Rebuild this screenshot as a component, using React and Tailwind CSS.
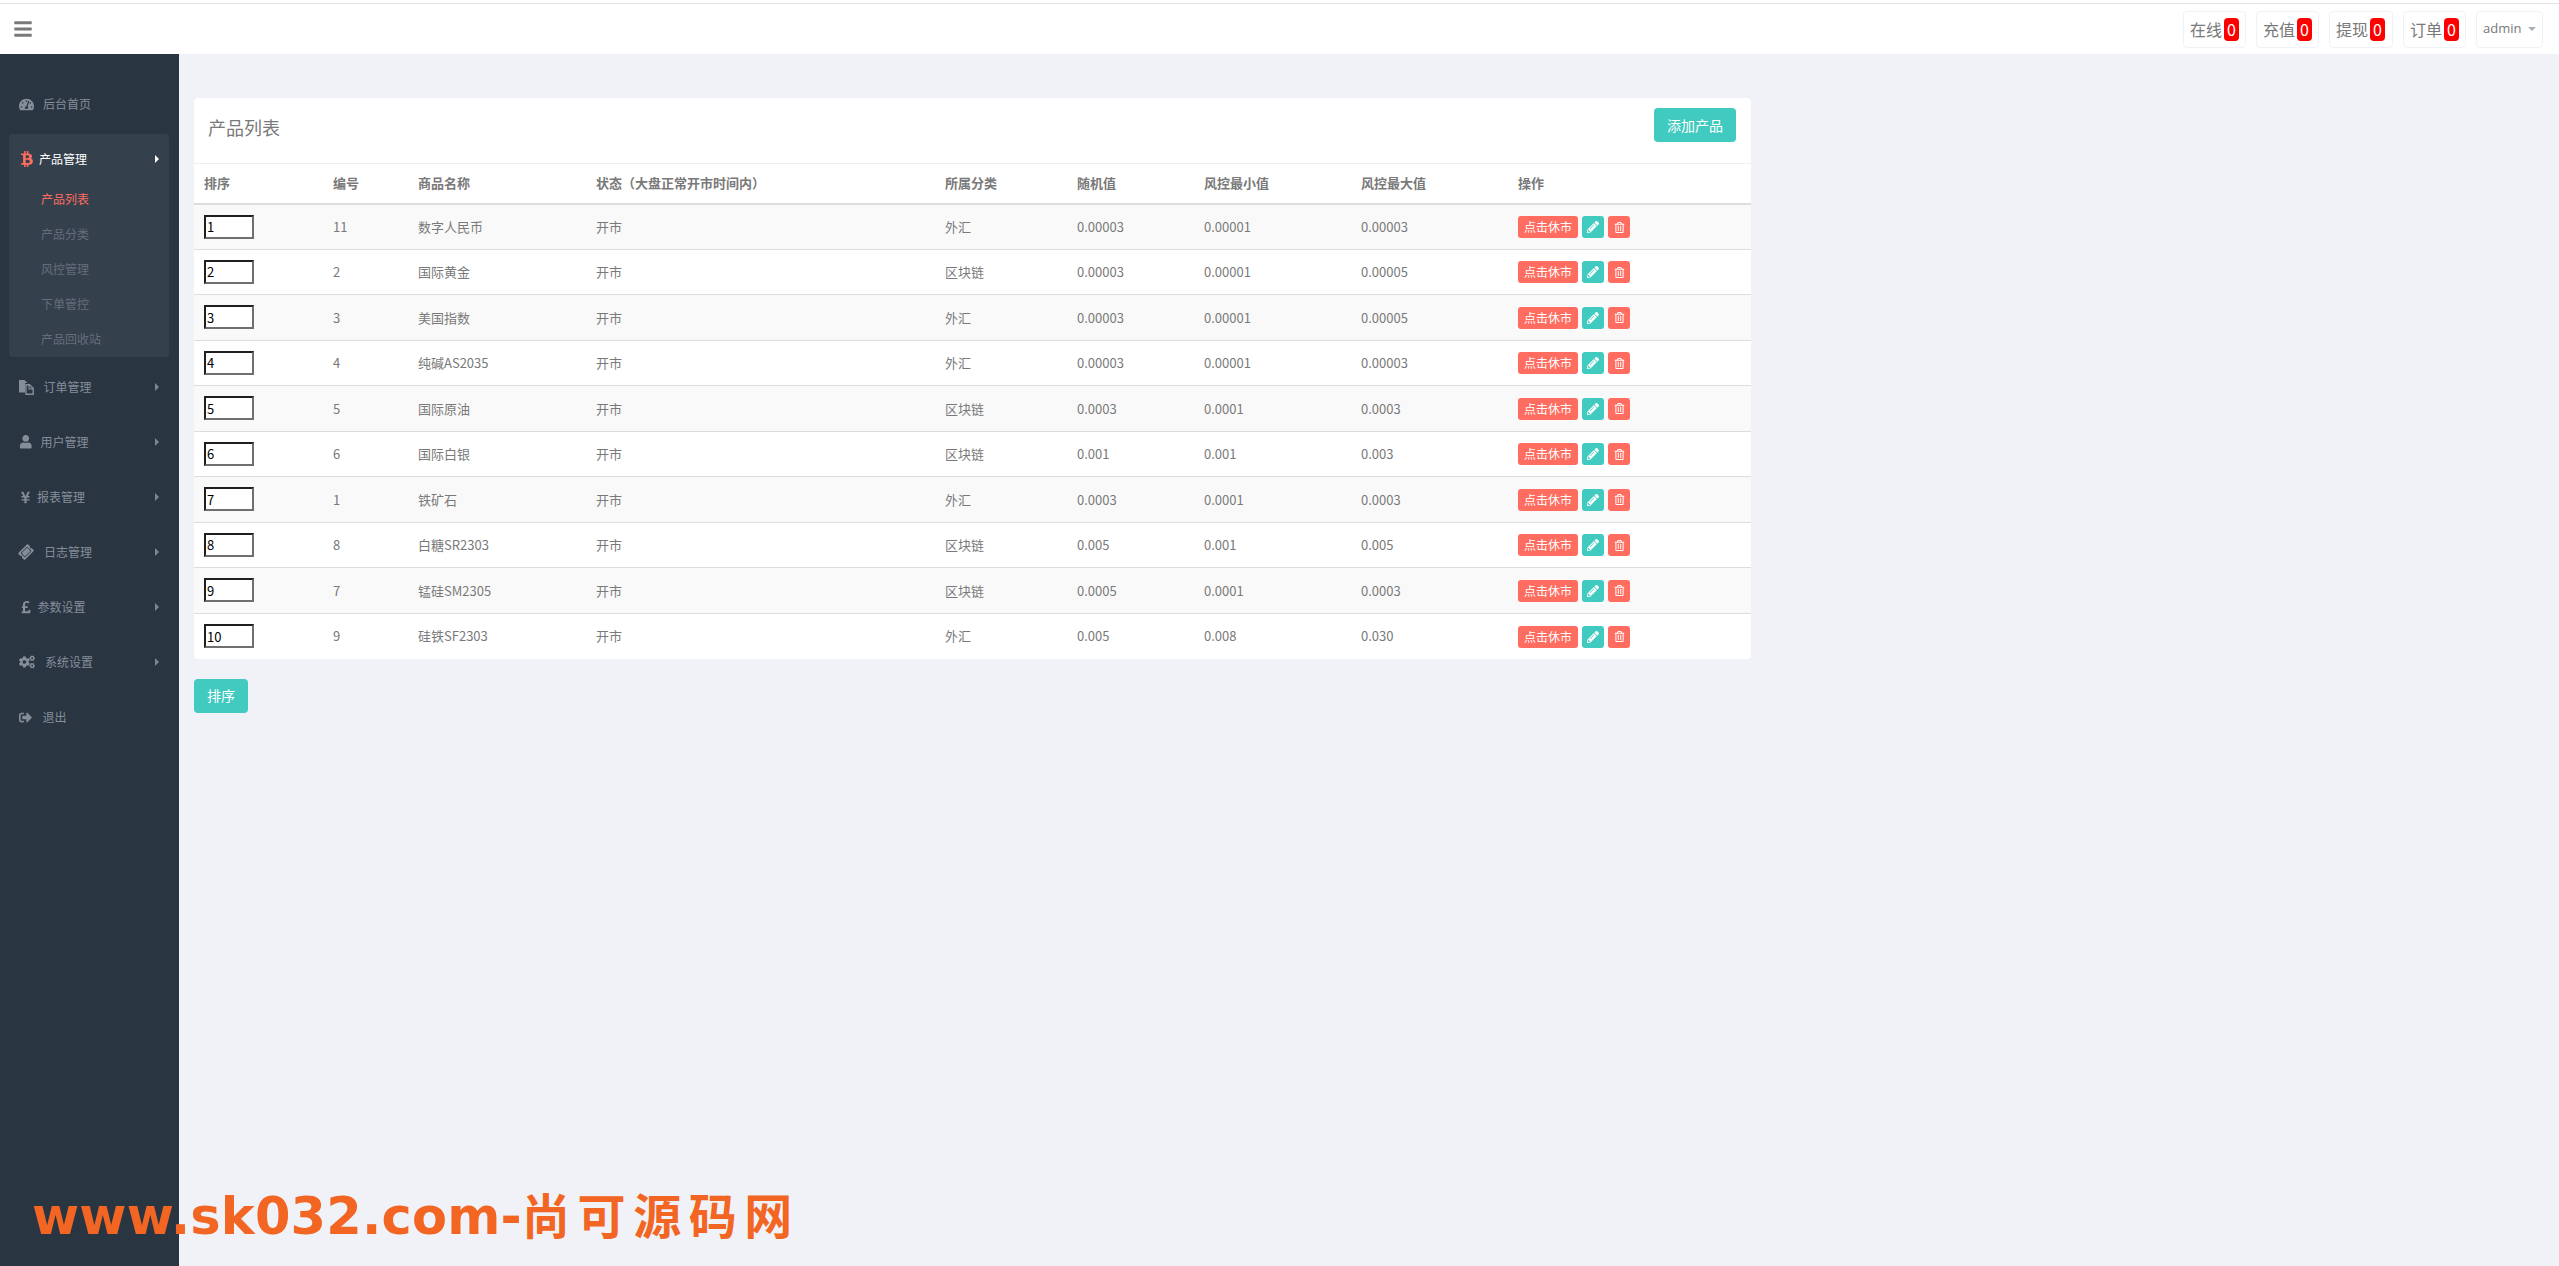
import React from "react";
import { FaBars, FaTachometerAlt, FaBtc, FaUser, FaYenSign, FaTicketAlt, FaPoundSign, FaCogs, FaSignOutAlt, FaPencilAlt, FaRegTrashAlt } from "react-icons/fa";

const rows = [
  ["1", "11", "数字人民币", "外汇", "0.00003", "0.00001", "0.00003"],
  ["2", "2", "国际黄金", "区块链", "0.00003", "0.00001", "0.00005"],
  ["3", "3", "美国指数", "外汇", "0.00003", "0.00001", "0.00005"],
  ["4", "4", "纯碱AS2035", "外汇", "0.00003", "0.00001", "0.00003"],
  ["5", "5", "国际原油", "区块链", "0.0003", "0.0001", "0.0003"],
  ["6", "6", "国际白银", "区块链", "0.001", "0.001", "0.003"],
  ["7", "1", "铁矿石", "外汇", "0.0003", "0.0001", "0.0003"],
  ["8", "8", "白糖SR2303", "区块链", "0.005", "0.001", "0.005"],
  ["9", "7", "锰硅SM2305", "区块链", "0.0005", "0.0001", "0.0003"],
  ["10", "9", "硅铁SF2303", "外汇", "0.005", "0.008", "0.030"],
];

const heads = ["排序", "编号", "商品名称", "状态（大盘正常开市时间内）", "所属分类", "随机值", "风控最小值", "风控最大值", "操作"];
const widths = ["w-[129px]", "w-[85px]", "w-[178px]", "w-[349px]", "w-[132px]", "w-[127px]", "w-[157px]", "w-[157px]", "w-[243px]"];

function FilesIcon() {
  return (
    <svg width="15" height="15" viewBox="0 0 15 15">
      <path d="M0 0H5.5L8.5 3H6V12.5H0Z" fill="currentColor" />
      <path d="M7 4.7H10.5L14.2 8.4V14.2H7Z" fill="none" stroke="currentColor" strokeWidth="1.4" />
      <path d="M10 4.5V8.8H14.5" fill="none" stroke="currentColor" strokeWidth="1.2" />
    </svg>
  );
}

const menuAfter = [
  { icon: <FilesIcon />, label: "订单管理", box: "w-[24.5px]" },
  { icon: <FaUser size={13.5} />, label: "用户管理", box: "w-[21.5px]" },
  { icon: <FaYenSign size={13} />, label: "报表管理", box: "w-[18px]" },
  { icon: <FaTicketAlt size={14} className="-rotate-45" />, label: "日志管理", box: "w-[25px]" },
  { icon: <FaPoundSign size={14} />, label: "参数设置", box: "w-[18.5px]" },
  { icon: <FaCogs size={16} />, label: "系统设置", box: "w-[26px]" },
  { icon: <FaSignOutAlt size={13} />, label: "退出", box: "w-[23.5px]", noArrow: true },
];

function MenuItem({ icon, label, box, noArrow }) {
  return (
    <div className="relative flex h-[55px] items-center pl-[19px] text-[12px] text-[#848e9a]">
      <span className={box + " flex shrink-0 items-center"}>{icon}</span>
      <span>{label}</span>
      {!noArrow && (
        <span className="absolute left-[155px] top-1/2 -mt-[4px] border-y-[4px] border-l-[4px] border-y-transparent border-l-[#7d8793]" />
      )}
    </div>
  );
}

function TopBox({ label, wide }) {
  return (
    <div className={(wide ? "w-[64px] " : "w-[63px] ") + "flex h-[37px] items-center rounded-[4px] border border-[#eff2f7] pl-[6px] text-[16px] text-[#797979]"}>
      <span>{label}</span>
      <span className="ml-[2px] flex h-[23px] w-[15px] items-center justify-center rounded-[4px] bg-[#ff0000] text-white">0</span>
    </div>
  );
}

export default function App() {
  return (
    <div className="relative flex min-h-screen flex-col overflow-hidden bg-[#f0f2f7] font-['Noto_Sans_CJK_SC','Noto_Sans',sans-serif]">
      <header className="h-[54px] shrink-0 bg-white pt-[3px]">
        <div className="flex h-[51px] items-center justify-between border-t border-[#e2e2e2] pl-[13px] pr-[16px]">
          <FaBars size={20} className="text-[#797979]" />
          <div className="flex items-center gap-[10px]">
            <TopBox label="在线" />
            <TopBox label="充值" />
            <TopBox label="提现" wide />
            <TopBox label="订单" />
            <div className="flex h-[37px] w-[67px] items-center rounded-[4px] border border-[#eff2f7] pl-[6px] font-['Open_Sans',sans-serif] text-[13px] text-[#797979]">
              <span>admin</span>
              <span className="ml-[7px] border-x-[4px] border-t-[4px] border-x-transparent border-t-[#a9b0b9]" />
            </div>
          </div>
        </div>
      </header>

      <div className="flex flex-1">
        <aside className="w-[179px] shrink-0 bg-[#2a3542] pt-[22.5px]">
          <MenuItem icon={<FaTachometerAlt size={15} />} label="后台首页" box="w-[24px]" noArrow />
          <div className="my-[2.5px] ml-[9px] mr-[10px] h-[223px] rounded-[4px] bg-[#35404d]">
            <div className="relative flex h-[47.5px] items-center pl-[10px] pt-[2px] text-[12px] text-white">
              <span className="flex w-[20px] shrink-0 items-center text-[#ff6c60]">
                <FaBtc size={16} />
              </span>
              <span>产品管理</span>
              <span className="absolute left-[146px] top-[21px] border-y-[4px] border-l-[4px] border-y-transparent border-l-white" />
            </div>
            <div className="pl-[32px] text-[12px] text-[#636e7a]">
              <div className="flex h-[35px] items-center text-[#ff6c60]">产品列表</div>
              <div className="flex h-[35px] items-center">产品分类</div>
              <div className="flex h-[35px] items-center">风控管理</div>
              <div className="flex h-[35px] items-center">下单管控</div>
              <div className="flex h-[35px] items-center">产品回收站</div>
            </div>
          </div>
          {menuAfter.map((m) => (
            <MenuItem key={m.label} {...m} />
          ))}
        </aside>

        <main className="w-[1572px] pl-[15px] pt-[44px]">
          <section className="w-[1557px] rounded-[4px] bg-white text-[13px] text-[#797979]">
            <div className="flex h-[65px] items-start justify-between pl-[14px] pr-[15px] pt-[10px]">
              <h2 className="text-[18px] font-normal leading-[38px]">产品列表</h2>
              <button className="h-[34px] w-[82px] rounded-[4px] bg-[#41cac0] text-[14px] text-white">添加产品</button>
            </div>
            <table className="w-full table-fixed border-collapse">
              <colgroup>
                {widths.map((w, i) => (
                  <col key={i} className={w} />
                ))}
              </colgroup>
              <thead>
                <tr className="h-[40px] border-t border-b-2 border-t-[#eeeeee] border-b-[#dddddd]">
                  {heads.map((h) => (
                    <th key={h} className="pb-[2px] pl-[10px] text-left font-bold">{h}</th>
                  ))}
                </tr>
              </thead>
              <tbody>
                {rows.map((r, i) => (
                  <tr key={r[0]} className={(i % 2 === 0 ? "bg-[#f9f9f9] " : "") + "h-[45.5px] border-b border-[#dddddd] last:border-b-0"}>
                    <td className="pl-[10px]">
                      <input
                        defaultValue={r[0]}
                        className="block h-[24px] w-[50px] border-2 border-t-[#1f1f1f] border-r-[#6f6f6f] border-b-[#6f6f6f] border-l-[#1f1f1f] bg-white px-[1px] text-[13px] text-black"
                      />
                    </td>
                    <td className="pl-[10px]">{r[1]}</td>
                    <td className="pl-[10px]">{r[2]}</td>
                    <td className="pl-[10px]">开市</td>
                    <td className="pl-[10px]">{r[3]}</td>
                    <td className="pl-[10px]">{r[4]}</td>
                    <td className="pl-[10px]">{r[5]}</td>
                    <td className="pl-[10px]">{r[6]}</td>
                    <td className="pl-[10px]">
                      <div className="flex gap-[4px] pt-[1px]">
                        <button className="h-[22px] w-[60px] rounded-[3px] bg-[#ff6c60] text-[12px] text-white">点击休市</button>
                        <button className="flex h-[22px] w-[22px] items-center justify-center rounded-[3px] bg-[#41cac0] text-white">
                          <FaPencilAlt size={12} />
                        </button>
                        <button className="flex h-[22px] w-[22px] items-center justify-center rounded-[3px] bg-[#ff6c60] text-white">
                          <FaRegTrashAlt size={11} />
                        </button>
                      </div>
                    </td>
                  </tr>
                ))}
              </tbody>
            </table>
          </section>
          <button className="mt-[20px] h-[34px] w-[54px] rounded-[4px] bg-[#41cac0] text-[14px] text-white">排序</button>
        </main>
      </div>

      <div className="absolute left-[32px] top-[1181px] flex items-baseline whitespace-nowrap font-bold leading-[64px] text-[#f26522]">
        <span className="font-['DejaVu_Sans',sans-serif] text-[51px] tracking-[0.2px]">www.sk032.com-</span>
        <span className="font-['Noto_Sans_CJK_SC',sans-serif] text-[48px] tracking-[7.6px]">尚可源码网</span>
      </div>
    </div>
  );
}
